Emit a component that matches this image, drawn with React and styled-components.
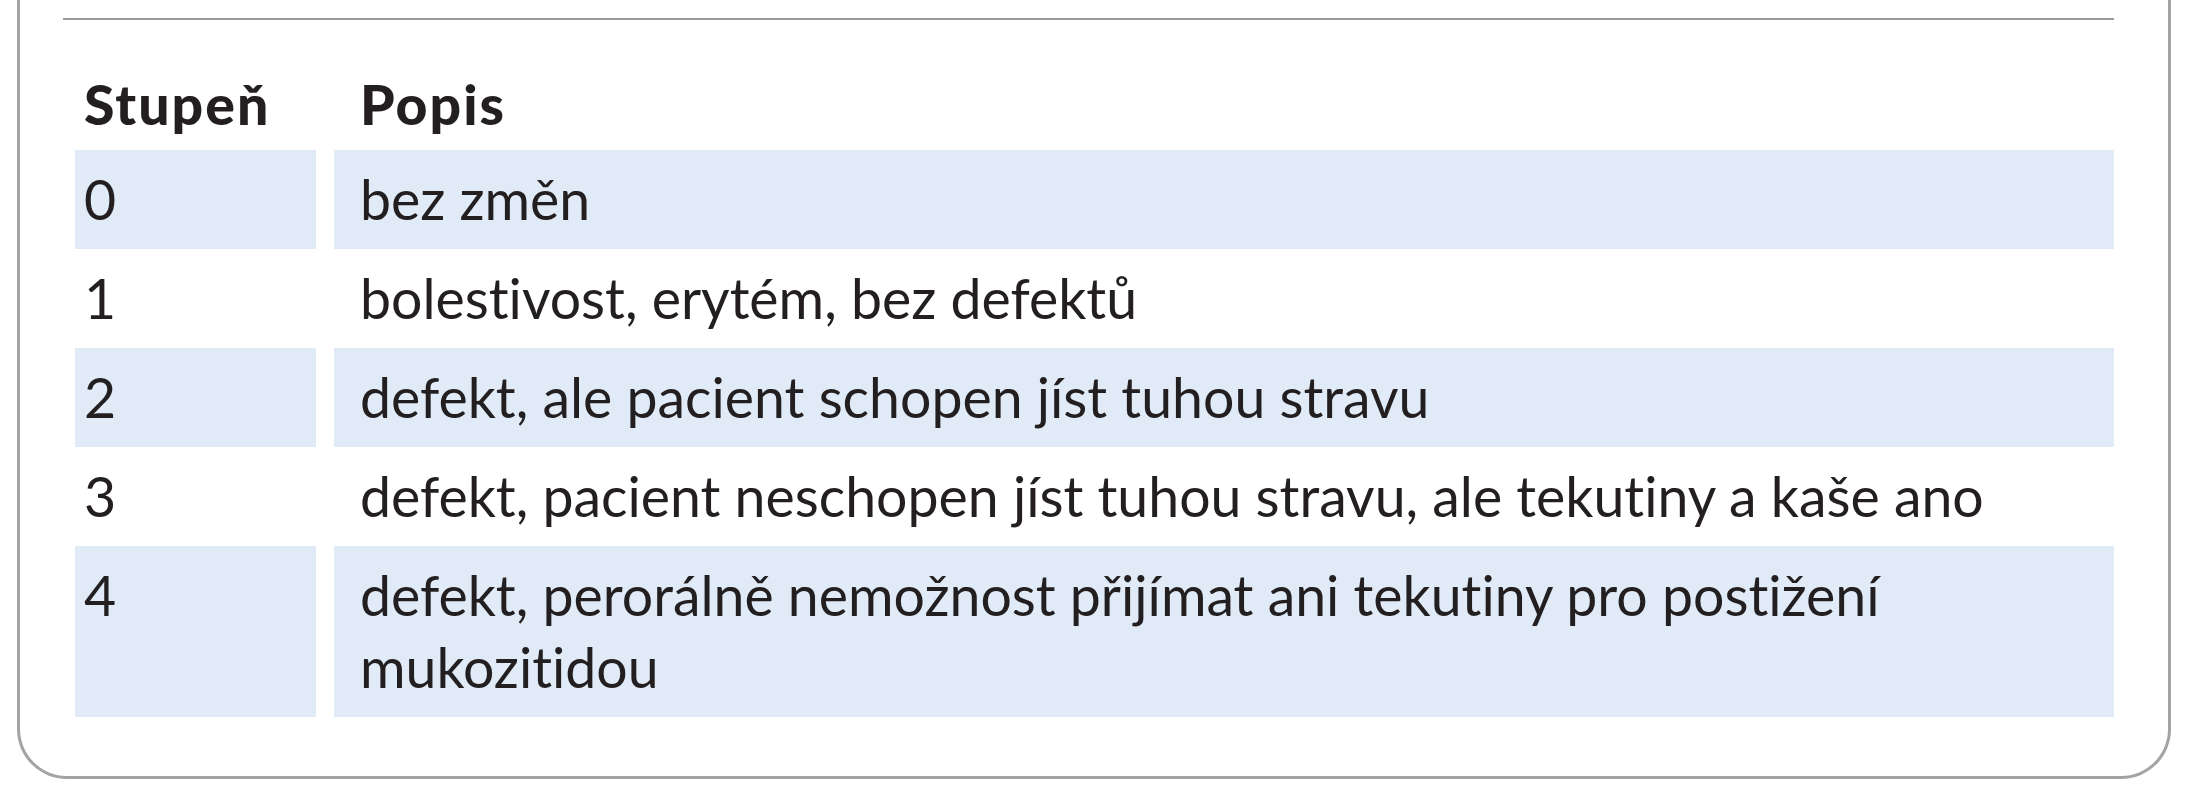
import { Fragment } from "react";
import styled, { createGlobalStyle } from "styled-components";

const Global = createGlobalStyle`
  body {
    margin: 0;
    background: #ffffff;
  }
`;

const Panel = styled.div`
  box-sizing: border-box;
  width: 2154px;
  margin-left: 17px;
  border: 3px solid #a3a3a3;
  border-top: none;
  border-radius: 0 0 50px 50px;
  padding: 18px 54px 59px 43px;
  background: #ffffff;
  font-family: Lato, "Open Sans", sans-serif;
  font-variant-ligatures: none;
  color: #231f20;
`;

const Rule = styled.hr`
  margin: 0;
  border: none;
  height: 2px;
  background: #9a9a9a;
`;

const Table = styled.div`
  display: grid;
  grid-template-columns: 241px 1fr;
  column-gap: 18px;
  margin: 0 0 0 12px;
`;

const Cell = styled.div`
  padding: ${(p) => (p.$head ? "48px 0 10px" : "13px 0 14px")};
  padding-left: ${(p) => (p.$wide ? "26px" : "9px")};
  padding-right: 40px;
  font-size: 55.4px;
  line-height: 72px;
  font-weight: ${(p) => (p.$head ? 900 : 400)};
  letter-spacing: ${(p) => (p.$head ? "2px" : "0")};
  background: ${(p) => (p.$shade ? "#e0ebf7" : "transparent")};
`;

const rows = [
  ["0", "bez změn"],
  ["1", "bolestivost, erytém, bez defektů"],
  ["2", "defekt, ale pacient schopen jíst tuhou stravu"],
  ["3", "defekt, pacient neschopen jíst tuhou stravu, ale tekutiny a kaše ano"],
  ["4", "defekt, perorálně nemožnost přijímat ani tekutiny pro postižení mukozitidou"],
];

export default function App() {
  return (
    <>
      <Global />
      <Panel>
        <Rule />
        <Table>
          <Cell $head>Stupeň</Cell>
          <Cell $head $wide>Popis</Cell>
          {rows.map(([grade, text], index) => (
            <Fragment key={grade}>
              <Cell $shade={index % 2 === 0}>{grade}</Cell>
              <Cell $shade={index % 2 === 0} $wide>{text}</Cell>
            </Fragment>
          ))}
        </Table>
      </Panel>
    </>
  );
}
